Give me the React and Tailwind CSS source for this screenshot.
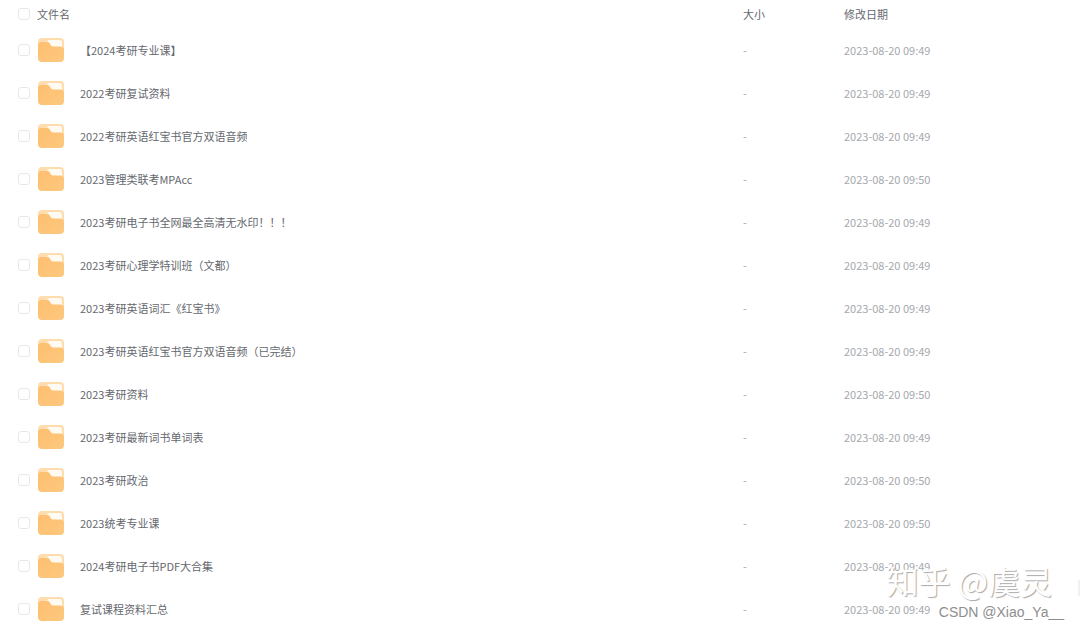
const files = [
  { name: "【2024考研专业课】", date: "2023-08-20 09:49" },
  { name: "2022考研复试资料", date: "2023-08-20 09:49" },
  { name: "2022考研英语红宝书官方双语音频", date: "2023-08-20 09:49" },
  { name: "2023管理类联考MPAcc", date: "2023-08-20 09:50" },
  { name: "2023考研电子书全网最全高清无水印！！！", date: "2023-08-20 09:49" },
  { name: "2023考研心理学特训班（文都）", date: "2023-08-20 09:49" },
  { name: "2023考研英语词汇《红宝书》", date: "2023-08-20 09:49" },
  { name: "2023考研英语红宝书官方双语音频（已完结）", date: "2023-08-20 09:49" },
  { name: "2023考研资料", date: "2023-08-20 09:50" },
  { name: "2023考研最新词书单词表", date: "2023-08-20 09:49" },
  { name: "2023考研政治", date: "2023-08-20 09:50" },
  { name: "2023统考专业课", date: "2023-08-20 09:50" },
  { name: "2024考研电子书PDF大合集", date: "2023-08-20 09:49" },
  { name: "复试课程资料汇总", date: "2023-08-20 09:49" },
];

function Checkbox({ label }) {
  return (
    <input
      type="checkbox"
      aria-label={label}
      className="h-3 w-3 shrink-0 appearance-none rounded-[3px] border border-[#e8e8ea] bg-white checked:border-[#ffb95c] checked:bg-[#ffc46f]"
    />
  );
}

function FolderIcon() {
  return (
    <svg viewBox="0 0 26 24" className="h-6 w-[26px] shrink-0" aria-hidden="true">
      <defs>
        <linearGradient id="folder-front" x1="0" y1="0" x2="1" y2="1">
          <stop offset="0" stopColor="#ffbf70" />
          <stop offset="1" stopColor="#fcc87e" />
        </linearGradient>
      </defs>
      <rect width="26" height="22" rx="4" fill="#ffdcae" />
      <rect x="9" y="2" width="15" height="10" rx="2.5" fill="#fffaf2" />
      <path
        d="M0 7.5Q0 4 3.5 4H9.4Q10.6 4 11.4 5L13 7.4Q13.8 8.5 15.2 8.5H22Q26 8.5 26 12V20Q26 24 22 24H4Q0 24 0 20Z"
        fill="url(#folder-front)"
      />
    </svg>
  );
}

function FileRow({ name, date }) {
  return (
    <tr className="h-[43px]">
      <td className="p-0 pl-[18px]">
        <div className="flex items-center">
          <Checkbox label={name} />
          <span className="ml-2 mr-4 flex">
            <FolderIcon />
          </span>
          <span className="truncate text-[#65686e]">{name}</span>
        </div>
      </td>
      <td className="p-0 text-[#a6a8ad]">-</td>
      <td className="p-0 text-[#a6a8ad]">{date}</td>
    </tr>
  );
}

function Watermark() {
  return (
    <div className="pointer-events-none absolute right-4 bottom-1 flex flex-col items-end whitespace-nowrap">
      <p className="mr-3 text-[32px] leading-10 text-white [text-shadow:1px_1px_1px_#a8a8a8]">
        知乎 @虞灵
      </p>
      <p className="font-['Liberation_Sans',sans-serif] text-sm leading-6 text-[#8e8e8e]">
        CSDN @Xiao_Ya__
      </p>
    </div>
  );
}

export default function App() {
  return (
    <main className="relative h-screen overflow-hidden bg-white font-['Noto_Sans_CJK_SC',sans-serif] text-[11px] leading-4">
      <table className="w-full table-fixed border-collapse text-left">
        <colgroup>
          <col />
          <col className="w-[101px]" />
          <col className="w-[236px]" />
        </colgroup>
        <thead>
          <tr className="h-7 text-[#65686e]">
            <th className="p-0 pl-[18px] font-normal">
              <div className="flex items-center gap-[7px]">
                <Checkbox label="全选" />
                文件名
              </div>
            </th>
            <th className="p-0 font-normal">大小</th>
            <th className="p-0 font-normal">修改日期</th>
          </tr>
        </thead>
        <tbody>
          {files.map((file) => (
            <FileRow key={file.name} name={file.name} date={file.date} />
          ))}
        </tbody>
      </table>
      <Watermark />
      <span className="absolute right-0 bottom-8 h-4 w-0.5 bg-[#f1f1f1]" />
    </main>
  );
}
